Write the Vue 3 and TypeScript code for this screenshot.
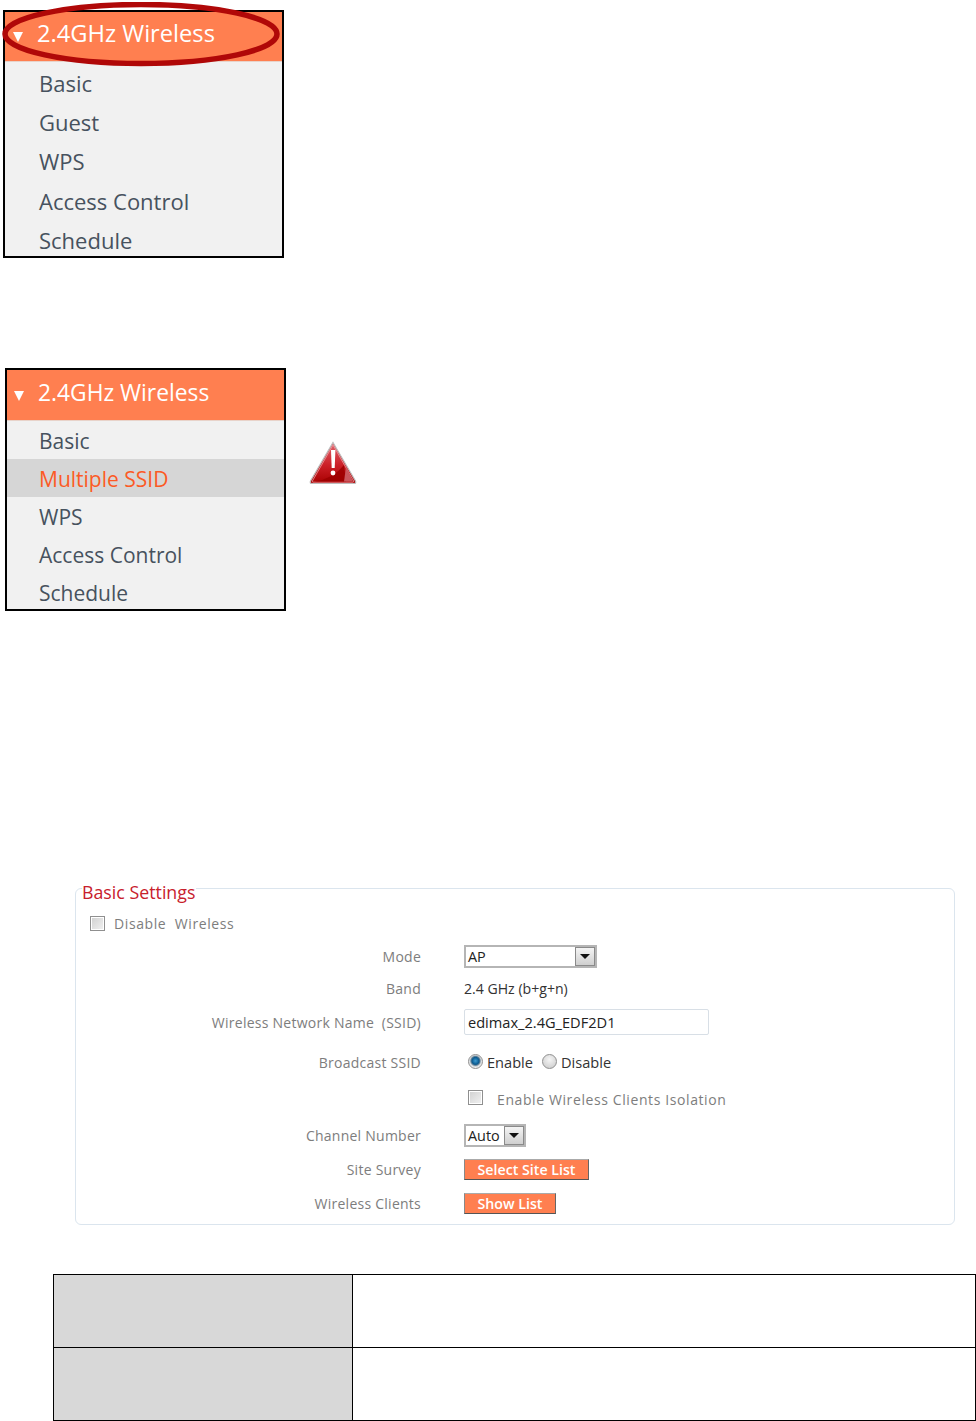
<template>
  <div class="page">
    <!-- first menu, with the red ring round its header -->
    <div class="menu menu-a">
      <div class="menu-head"><span class="tri"></span>2.4GHz Wireless</div>
      <div v-for="item in firstMenu" :key="item" class="menu-item">{{ item }}</div>
      <svg class="ring" width="284" height="70" viewBox="0 0 284 70">
        <ellipse cx="139" cy="32" rx="136" ry="29.5" fill="none" stroke="#b00808" stroke-width="5.5" />
      </svg>
    </div>

    <div class="menu-row">
      <div class="menu menu-b">
        <div class="menu-head"><span class="tri"></span>2.4GHz Wireless</div>
        <div
          v-for="item in secondMenu"
          :key="item"
          class="menu-item"
          :class="{ active: item === 'Multiple SSID' }"
        >{{ item }}</div>
      </div>
      <svg class="warn" width="48" height="44" viewBox="0 0 48 44">
        <defs>
          <linearGradient id="warnFill" x1="0" y1="0" x2="0" y2="1">
            <stop offset="0" stop-color="#e0646c" />
            <stop offset="0.55" stop-color="#cc2028" />
            <stop offset="1" stop-color="#a80000" />
          </linearGradient>
        </defs>
        <path d="M24 1.5 L46.5 40 Q47.5 42.5 45 42.5 L3 42.5 Q0.5 42.5 1.5 40 Z" fill="url(#warnFill)" stroke="#bdbdbd" stroke-width="1.2" />
        <path d="M24 4 L44.6 40 Q45 41.2 44 41.2 L4 41.2 Q3 41.2 3.4 40 Z" fill="none" stroke="#eaa0a4" stroke-width="0.8" />
        <path d="M5.5 40.5 Q24 38 35 24 L37 40.5 Z" fill="#9c0000" opacity="0.85" />
        <path d="M37 26 L44 40.5 L35 40.5 Z" fill="#c9565c" />
        <path d="M22 9 h4.4 l-0.7 18 h-3 Z" fill="#fff" />
        <circle cx="24" cy="32" r="2.4" fill="#fff" />
      </svg>
    </div>

    <div class="panel">
      <div class="legend">Basic Settings</div>
      <div class="disable-row">
        <span class="check"></span>
        <span class="label wide">Disable&nbsp; Wireless</span>
      </div>
      <div class="form">
        <span class="label right">Mode</span>
        <div class="select mode">
          <span class="select-val">AP</span>
          <span class="select-btn"><i></i></span>
        </div>

        <span class="label right">Band</span>
        <span class="value band">2.4 GHz (b+g+n)</span>

        <span class="label right">Wireless Network Name&nbsp; (SSID)</span>
        <div class="text-input">edimax_2.4G_EDF2D1</div>

        <span class="label right">Broadcast SSID</span>
        <div class="radios">
          <span class="radio on"></span><span class="value">Enable</span>
          <span class="radio"></span><span class="value">Disable</span>
        </div>

        <span></span>
        <div class="iso">
          <span class="check"></span>
          <span class="label wide">Enable Wireless Clients Isolation</span>
        </div>

        <span class="label right">Channel Number</span>
        <div class="select channel">
          <span class="select-val">Auto</span>
          <span class="select-btn"><i></i></span>
        </div>

        <span class="label right">Site Survey</span>
        <div><button class="btn site">Select Site List</button></div>

        <span class="label right">Wireless Clients</span>
        <div><button class="btn show">Show List</button></div>
      </div>
    </div>

    <table class="grid">
      <tbody>
        <tr><td class="head"></td><td></td></tr>
        <tr><td class="head"></td><td></td></tr>
      </tbody>
    </table>
  </div>
</template>

<script setup lang="ts">
const firstMenu: string[] = ['Basic', 'Guest', 'WPS', 'Access Control', 'Schedule']
const secondMenu: string[] = ['Basic', 'Multiple SSID', 'WPS', 'Access Control', 'Schedule']
</script>

<style>
html, body {
  background: #fff;
}
</style>

<style scoped>
.page {
  width: 976px;
  height: 1421px;
  padding-top: 10px;
  box-sizing: border-box;
  overflow: hidden;
  font-family: "Open Sans", "Noto Sans", sans-serif;
}
.menu {
  position: relative;
  width: 281px;
  box-sizing: border-box;
  border: 2px solid #000;
  background: #f1f1f1;
  color: #47525e;
}
.menu-a {
  margin-left: 3px;
  height: 248px;
  font-size: 22px;
}
.menu-b {
  height: 243px;
  font-size: 21px;
}
.menu-head {
  display: flex;
  align-items: center;
  background: #ff7f50;
  color: #fff;
  border-bottom: 1px solid #e8d3ca;
  box-sizing: border-box;
}
.menu-a .menu-head {
  height: 50px;
  padding: 0 0 7px 8px;
  font-size: 23.7px;
}
.menu-b .menu-head {
  height: 51px;
  padding: 0 0 6px 7px;
  font-size: 22.8px;
}
.tri {
  width: 0;
  height: 0;
  border-left: 5px solid transparent;
  border-right: 5px solid transparent;
  border-top: 10px solid #fff;
  margin-right: 14px;
  margin-top: 8px;
}
.menu-item {
  display: flex;
  align-items: center;
  padding-left: 32px;
  box-sizing: border-box;
}
.menu-a .menu-item {
  height: 39.4px;
  padding-left: 34px;
  padding-top: 2px;
}
.menu-b .menu-item {
  height: 38px;
  padding-top: 2px;
}
.menu-item.active {
  background: #d6d6d6;
  color: #fc5a25;
}
.ring {
  position: absolute;
  left: -3px;
  top: -10px;
}
.menu-row {
  display: flex;
  margin-top: 110px;
  margin-left: 5px;
}
.warn {
  margin-left: 23px;
  margin-top: 73px;
}
.panel {
  width: 880px;
  height: 337px;
  box-sizing: border-box;
  margin: 277px 0 0 75px;
  border: 1px solid #dbe5ee;
  border-radius: 6px;
  position: relative;
}
.legend {
  position: absolute;
  left: 6px;
  top: -7px;
  padding-right: 1px;
  background: #fff;
  color: #c8202c;
  font-size: 17.8px;
  line-height: 20px;
}
.label {
  color: #7d7d7d;
  font-size: 14px;
  letter-spacing: 0.25px;
}
.label.wide {
  letter-spacing: 0.6px;
}
.right {
  text-align: right;
}
.value {
  color: #333;
  font-size: 14.6px;
}
.value.band {
  font-size: 14.1px;
}
.check {
  display: inline-block;
  width: 15px;
  height: 15px;
  box-sizing: border-box;
  border: 1px solid #8f8f8f;
  background: linear-gradient(135deg, #d0d0d0, #f2f2f2);
  box-shadow: inset 0 0 0 1px #fff;
}
.disable-row {
  display: flex;
  align-items: center;
  gap: 9px;
  margin: 24px 0 0 14px;
  height: 20px;
}
.form {
  display: grid;
  grid-template-columns: 345px 1fr;
  column-gap: 43px;
  grid-template-rows: 32px 32px 36px 44px 30px 42px 26px 42px;
  align-items: center;
  margin-top: 7px;
}
.select {
  display: flex;
  box-sizing: border-box;
  height: 23px;
  border: 2px solid #b5b5b5;
  background: #fff;
  color: #222;
  font-size: 14.4px;
}
.select-val {
  flex: 1;
  padding-left: 2px;
  line-height: 19px;
}
.select-btn {
  width: 20px;
  box-sizing: border-box;
  display: flex;
  align-items: center;
  justify-content: center;
  background: linear-gradient(#f4f4f4, #cfcfcf);
  border: 1px solid #8a8a8a;
}
.select-btn i {
  width: 0;
  height: 0;
  border-left: 5px solid transparent;
  border-right: 5px solid transparent;
  border-top: 5px solid #111;
}
.mode {
  width: 133px;
}
.channel {
  width: 62px;
}
.text-input {
  width: 245px;
  height: 26px;
  box-sizing: border-box;
  border: 1px solid #d8dfe6;
  border-radius: 2px;
  padding-left: 3px;
  line-height: 24px;
  color: #222;
  font-size: 14.6px;
}
.radios {
  display: flex;
  align-items: center;
  margin-left: 4px;
}
.radio {
  width: 15px;
  height: 15px;
  box-sizing: border-box;
  border-radius: 50%;
  border: 1px solid #8f8f8f;
  background: radial-gradient(circle at 50% 35%, #f5f5f5, #c8c8c8);
  margin-right: 4px;
  margin-bottom: 2px;
}
.radio.on {
  background: radial-gradient(circle at 50% 45%, #3d9bd0 0, #0a5a90 3.5px, #5f7f95 4.5px, #c8d0d6 5.5px, #eee 6.5px);
}
.radio.on + .value {
  margin-right: 9px;
}
.iso {
  display: flex;
  align-items: center;
  gap: 14px;
  margin-left: 4px;
}
.iso .check {
  margin-bottom: 4px;
}
.btn {
  display: block;
  height: 21px;
  padding: 0;
  background: #ff7f50;
  color: #fff;
  font-family: inherit;
  font-size: 14.2px;
  font-weight: 600;
  border: 1px solid;
  border-color: #aaa #666 #555 #888;
}
.site {
  width: 125px;
}
.show {
  width: 92px;
}
.grid {
  width: 923px;
  margin: 49px 0 0 53px;
  border-collapse: collapse;
  table-layout: fixed;
}
.grid td {
  border: 1px solid #000;
  padding: 0;
  height: 72px;
}
.grid .head {
  width: 298px;
  background: #d8d8d8;
}
</style>
